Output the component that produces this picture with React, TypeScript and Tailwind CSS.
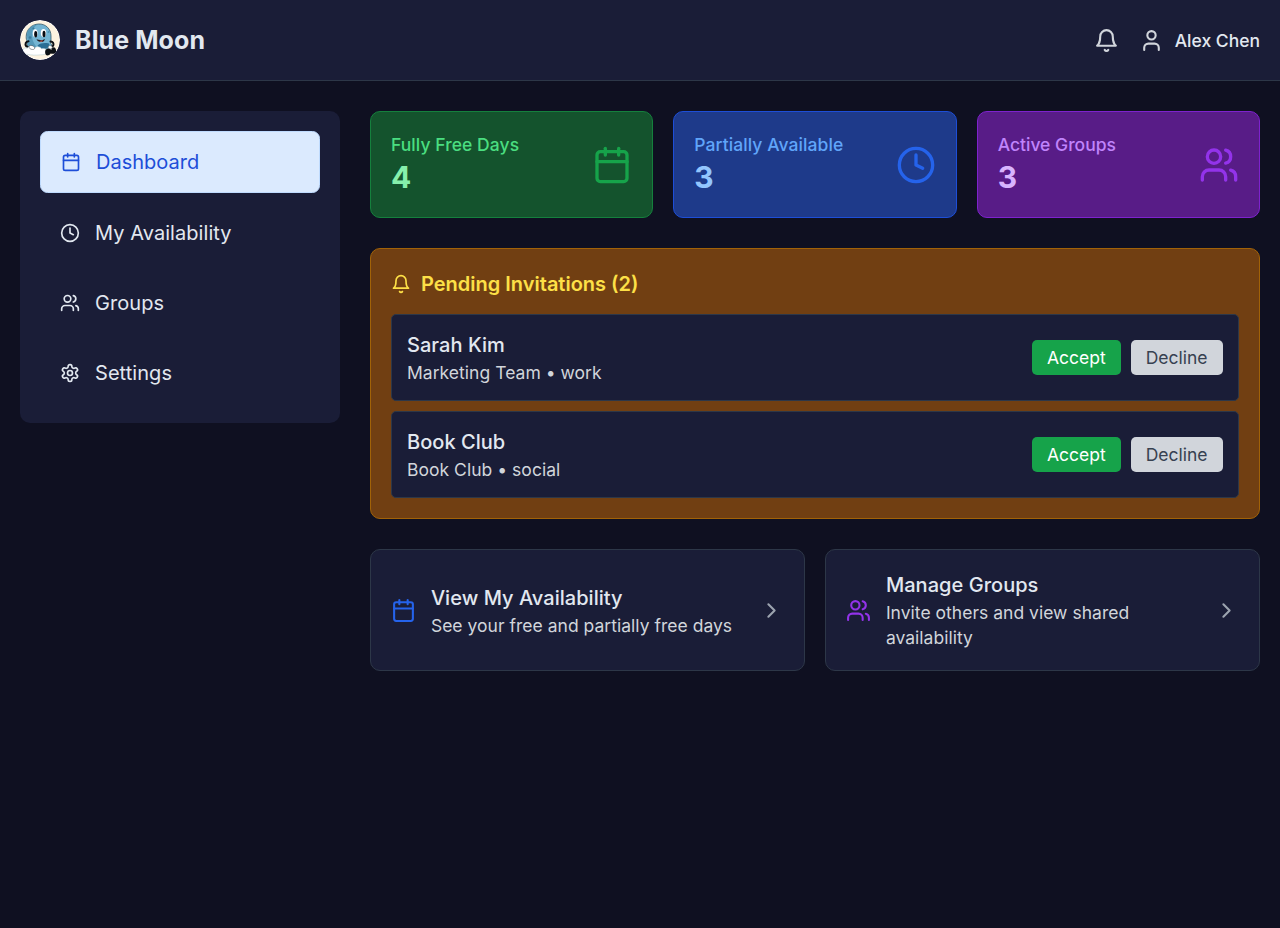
import React from "react";
import { Calendar, ChevronRight, Clock, User, Users } from "lucide-react";

type IconProps = { className?: string };

function Bell({ className }: IconProps) {
  return (
    <svg className={className} viewBox="0 0 24 24" fill="none" stroke="currentColor" strokeWidth="2" strokeLinecap="round" strokeLinejoin="round">
      <path d="M6 8a6 6 0 0 1 12 0c0 7 3 9 3 9H3s3-2 3-9" />
      <path d="M10.3 21a1.94 1.94 0 0 0 3.4 0" />
    </svg>
  );
}

function Gear({ className }: IconProps) {
  return (
    <svg className={className} viewBox="0 0 24 24" fill="none" stroke="currentColor" strokeWidth="2" strokeLinecap="round" strokeLinejoin="round">
      <path d="M12.22 2h-.44a2 2 0 0 0-2 2v.18a2 2 0 0 1-1 1.73l-.43.25a2 2 0 0 1-2 0l-.15-.08a2 2 0 0 0-2.73.73l-.22.38a2 2 0 0 0 .73 2.73l.15.1a2 2 0 0 1 1 1.72v.51a2 2 0 0 1-1 1.74l-.15.09a2 2 0 0 0-.73 2.73l.22.38a2 2 0 0 0 2.73.73l.15-.08a2 2 0 0 1 2 0l.43.25a2 2 0 0 1 1 1.73V20a2 2 0 0 0 2 2h.44a2 2 0 0 0 2-2v-.18a2 2 0 0 1 1-1.73l.43-.25a2 2 0 0 1 2 0l.15.08a2 2 0 0 0 2.73-.73l.22-.39a2 2 0 0 0-.73-2.73l-.15-.08a2 2 0 0 1-1-1.74v-.5a2 2 0 0 1 1-1.74l.15-.09a2 2 0 0 0 .73-2.73l-.22-.38a2 2 0 0 0-2.73-.73l-.15.08a2 2 0 0 1-2 0l-.43-.25a2 2 0 0 1-1-1.73V4a2 2 0 0 0-2-2z" />
      <circle cx="12" cy="12" r="3" />
    </svg>
  );
}

function Logo() {
  return (
    <svg className="size-10 rounded-full" viewBox="0 0 40 40">
      <circle cx="20" cy="20" r="20" fill="#fff" />
      <circle cx="20" cy="20" r="19.3" fill="#fdf3e0" />
      {/* moon */}
      <path d="M18.500 4C25.800 3.600 31 9 31 16c0 3 .2 5-.5 7 1.500 1.500 1.500 4 .5 6H9c-1.500-2-2.500-4-1.500-7C6.500 20.500 6 18.500 6.200 16.300 6.400 9.500 11.500 4.400 18.500 4z" fill="#74b5d3" stroke="#35596b" strokeWidth=".8" />
      <path d="M7 16C7 10 11 5.500 17 4.800c-3 2-4.500 4.700-5 8.200-.5 5 1 10 5 14.500H9.500C7 25 8 22 8 21z" fill="#5599b9" />
      <circle cx="10" cy="17.500" r="1.300" fill="#397b9c" />
      <circle cx="13.500" cy="8.500" r="1.100" fill="#397b9c" />
      <circle cx="28.500" cy="12" r="1" fill="#4c93b6" />
      <path d="M17.500 25.500c3-2.500 7-3 11.500-2l1 3.500-9 2.500z" fill="#296d94" />
      {/* face */}
      <ellipse cx="15.200" cy="13.300" rx="2.400" ry="4" fill="#fff" />
      <ellipse cx="23.500" cy="13" rx="2.700" ry="4" fill="#fff" />
      <ellipse cx="15.700" cy="14.300" rx="1.500" ry="3.200" fill="#090c12" />
      <ellipse cx="24" cy="14" rx="1.500" ry="3.200" fill="#090c12" />
      <path d="M16.500 19.300c2.800 1.200 5.700 1 8.500-.4-.8 2.200-2.200 3.100-4 3.100-2 0-3.600-.9-4.500-2.700z" fill="#25181c" />
      <path d="M19.300 21c1-.7 2.700-.7 3.700-.2-.8 1-2.500 1.200-3.700.2z" fill="#df7165" />
      {/* arms */}
      <path d="M8.500 21.300c-2.700.2-3.800 2.700-2.300 4.900l2.800 1.200" fill="none" stroke="#0b0f14" strokeWidth="2" strokeLinecap="round" />
      <path d="M30.500 21.500c2.500.2 3.500 2 2.700 4.200l-1.800 1.300" fill="none" stroke="#0b0f14" strokeWidth="2" strokeLinecap="round" />
      {/* cloud */}
      <path d="M3 31c-.5-2.500 2-3.800 4.200-2.500C8 26 12.500 25.500 14.500 28c2.200-2 6-1.400 7 .8 2.300-1 5 .2 5.300 2.200.1 3-3 4-6 3.800-5 .6-10 .4-13.300-.5C5 34.300 3.500 33 3 31z" fill="#fff" stroke="#afcbd5" strokeWidth=".5" />
      <path d="M9 26c1.500-1.200 4.500-.6 5.500 1.300.6 1.500-.5 2.400-2 2.200-2 .1-4-1.500-3.500-3.500z" fill="#fff" stroke="#333d44" strokeWidth=".5" />
      <path d="M28.500 26c1.500-1 3.800-.2 4 1.500l-2 1.500-2.500-.7z" fill="#fff" stroke="#333d44" strokeWidth=".4" />
      {/* boots */}
      <path d="M25.500 30c1.500-1.500 4-1.500 5.500-.2l1-.8c-.2-1.700 2.200-2.500 3.200-1 1.200 2 1.200 4 0 5.200-1.500.8-3.200.8-4.500.2-1.200 2-3.700 2.600-4.900 1.300-.8-1.500-.9-3.200-.3-4.700z" fill="#0b0f14" />
    </svg>
  );
}

const navItems = [
  { label: "My Availability", Icon: Clock },
  { label: "Groups", Icon: Users },
  { label: "Settings", Icon: Gear },
];

const stats = [
  { label: "Fully Free Days", value: 4, Icon: Calendar, card: "bg-[#14532d] border-[#15803d]", text: "text-[#4ade80] tracking-[0.06px]", number: "text-[#86efac]", icon: "text-[#16a34a]" },
  { label: "Partially Available", value: 3, Icon: Clock, card: "bg-[#1e3a8a] border-[#1d4ed8]", text: "text-[#60a5fa] tracking-[0.08px]", number: "text-[#93c5fd]", icon: "text-[#2563eb]" },
  { label: "Active Groups", value: 3, Icon: Users, card: "bg-[#581c87] border-[#7e22ce]", text: "text-[#c084fc]", number: "text-[#d8b4fe]", icon: "text-[#9333ea]" },
];

const invitations = [
  { name: "Sarah Kim", detail: "Marketing Team • work" },
  { name: "Book Club", detail: "Book Club • social" },
];

const actions = [
  { title: "View My Availability", detail: "See your free and partially free days", Icon: Calendar, color: "text-[#2563eb]" },
  { title: "Manage Groups", detail: "Invite others and view shared availability", Icon: Users, color: "text-[#9333ea]" },
];

export default function App() {
  return (
    <div className="min-h-screen bg-[#0f1021] font-['Inter',sans-serif] text-[20px] leading-[30px] text-[#e2e8f0]">
      <header className="flex h-[81px] items-center justify-between border-b border-[#2d3748] bg-[#1a1d37] px-5">
        <div className="flex items-center gap-[15px]">
          <Logo />
          <h1 className="text-[25px] leading-[35px] font-bold tracking-[0.1px]">Blue Moon</h1>
        </div>
        <div className="flex items-center gap-5">
          <Bell className="size-[25px] text-[#d1d5db]" />
          <div className="flex items-center gap-[11px]">
            <User className="size-[25px] text-[#d1d5db]" />
            <span className="text-[17.5px] leading-[25px] font-medium">Alex Chen</span>
          </div>
        </div>
      </header>

      <div className="flex items-start gap-[30px] px-5 py-[30px]">
        <nav className="flex w-80 shrink-0 flex-col gap-2.5 rounded-[10px] bg-[#1a1d37] p-5">
          <button className="flex items-center gap-[15px] rounded-[7.5px] border border-[#bfdbfe] bg-[#dbeafe] px-5 py-[15px] text-[#1d4ed8]">
            <Calendar className="size-5" />
            <span>Dashboard</span>
          </button>
          {navItems.map(({ label, Icon }) => (
            <button key={label} className="flex items-center gap-[15px] px-5 py-[15px] tracking-[0.06px]">
              <Icon className="size-5" />
              <span>{label}</span>
            </button>
          ))}
        </nav>

        <main className="flex min-w-0 flex-1 flex-col gap-[30px]">
          <section className="grid grid-cols-3 gap-5">
            {stats.map(({ label, value, Icon, card, text, number, icon }) => (
              <div key={label} className={`flex items-center justify-between rounded-[10px] border p-5 ${card}`}>
                <div>
                  <p className={`text-[17.5px] leading-[25px] font-medium ${text}`}>{label}</p>
                  <p className={`text-[30px] leading-10 font-bold ${number}`}>{value}</p>
                </div>
                <Icon className={`size-10 ${icon}`} />
              </div>
            ))}
          </section>

          <section className="rounded-[10px] border border-[#a16207] bg-[#713f12] p-5">
            <h2 className="mb-[15px] flex items-center gap-2.5 font-semibold text-[#fde047]">
              <Bell className="size-5" />
              Pending Invitations (2)
            </h2>
            <div className="flex flex-col gap-2.5">
              {invitations.map(({ name, detail }) => (
                <div key={name} className="flex items-center justify-between rounded-[5px] border border-[#2d3748] bg-[#1a1d37] p-[15px]">
                  <div>
                    <p className="font-medium tracking-[0.04px]">{name}</p>
                    <p className="text-[17.5px] leading-[25px] tracking-[0.03px] text-[#d1d5db]">{detail}</p>
                  </div>
                  <div className="flex gap-2.5 text-[17.5px] leading-[25px]">
                    <button className="rounded-[5px] bg-[#16a34a] py-[5px] pr-[15.5px] pl-[14.5px] text-white">Accept</button>
                    <button className="rounded-[5px] bg-[#d1d5db] py-[5px] pr-[15.5px] pl-[14.5px] text-[#374151]">Decline</button>
                  </div>
                </div>
              ))}
            </div>
          </section>

          <section className="grid grid-cols-2 gap-5">
            {actions.map(({ title, detail, Icon, color }) => (
              <button key={title} className="flex items-center gap-[14.9px] rounded-[10px] border border-[#2d3748] bg-[#1a1d37] p-5 text-left">
                <Icon className={`size-[25px] shrink-0 ${color}`} />
                <div className="min-w-0 flex-1">
                  <p className="font-medium tracking-[0.04px]">{title}</p>
                  <p className="text-[17.5px] leading-[25px] tracking-[0.02px] text-[#d1d5db]">{detail}</p>
                </div>
                <ChevronRight className="size-[25px] shrink-0 text-[#9ca3af]" />
              </button>
            ))}
          </section>
        </main>
      </div>
    </div>
  );
}
